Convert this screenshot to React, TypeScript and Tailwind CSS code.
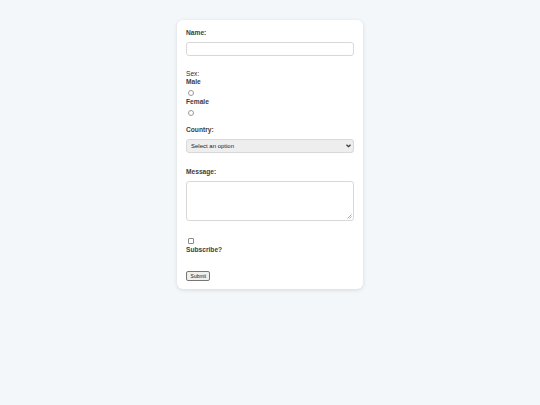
import React from "react";

const lbl = "block h-[10px] text-[8px] font-bold leading-[10px] text-[#3c3c3c]";
const small = "block h-[8px] text-[8px] leading-[8px]";

function N({ children, center }: { children: React.ReactNode; center?: boolean }) {
  return (
    <span className={(center ? "origin-center " : "origin-left ") + "inline-block scale-x-[0.83] whitespace-nowrap"}>
      {children}
    </span>
  );
}

export default function App() {
  return (
    <div className="min-h-[405px] w-full bg-[#f4f7fa] pt-[20px] font-['Liberation_Sans',Arial,sans-serif]">
      <form className="ml-[177px] flex w-[186px] flex-col rounded-[6px] bg-white px-[9px] pb-[8px] pt-[8px] shadow-[0_1px_4px_rgba(0,0,0,0.12)]">
        <label className={lbl}>
          <N>Name:</N>
        </label>
        <input
          type="text"
          className="mt-[4px] block h-[14px] w-[168px] rounded-[3px] border border-[#d8d8d8] bg-white outline-none"
        />
        <div className={"mt-[14px] text-[#2e2e2e] " + small}>
          <N>Sex:</N>
        </div>
        <label className={"font-bold text-[#3c3c3c] " + small}>
          <N>Male</N>
        </label>
        <input
          type="radio"
          name="sex"
          className="ml-[2px] mt-[4px] block h-[6px] w-[6px] appearance-none rounded-full border border-[#9a9a9a] bg-white"
        />
        <label className={"mt-[2px] font-bold text-[#3c3c3c] " + small}>
          <N>Female</N>
        </label>
        <input
          type="radio"
          name="sex"
          className="ml-[2px] mt-[4px] block h-[6px] w-[6px] appearance-none rounded-full border border-[#9a9a9a] bg-white"
        />
        <label className={"mt-[9px] " + lbl}>
          <N>Country:</N>
        </label>
        <div className="relative mt-[4px] h-[14px] w-[168px]">
          <select className="block h-[14px] w-[168px] appearance-none rounded-[3px] border border-[#d8d8d8] bg-[#eeeeee] pl-[4px] text-[6px] leading-[12px] text-[#222] outline-none">
            <option>Select an option</option>
          </select>
          <svg
            className="pointer-events-none absolute right-[3px] top-[5px]"
            width="5"
            height="4"
            viewBox="0 0 10 8"
          >
            <path d="M1 1.5 L5 5.5 L9 1.5" fill="none" stroke="#333" strokeWidth="2.4" />
          </svg>
        </div>
        <label className={"mt-[14px] " + lbl}>
          <N>Message:</N>
        </label>
        <div className="relative mt-[4px] h-[40px] w-[168px]">
          <textarea className="block h-[40px] w-[168px] resize-none rounded-[3px] border border-[#d8d8d8] bg-white outline-none" />
          <svg className="pointer-events-none absolute bottom-[2px] right-[2px]" width="5" height="5" viewBox="0 0 5 5">
            <path d="M4.5 0.5 L0.5 4.5 M4.5 2.5 L2.5 4.5" stroke="#999" strokeWidth="0.8" />
          </svg>
        </div>
        <input
          type="checkbox"
          className="ml-[2px] mt-[17px] block h-[6px] w-[6px] appearance-none rounded-[1px] border border-[#8a8a8a] bg-white"
        />
        <label className={"mt-[1px] " + lbl}>
          <N>Subscribe?</N>
        </label>
        <div className="mt-[16px]">
          <button
            type="button"
            className="flex h-[10px] w-[24px] items-center justify-center rounded-[2px] border border-[#767676] bg-[#efefef] text-[6px] leading-[8px] text-[#111]"
          >
            <N center>Submit</N>
          </button>
        </div>
      </form>
    </div>
  );
}
